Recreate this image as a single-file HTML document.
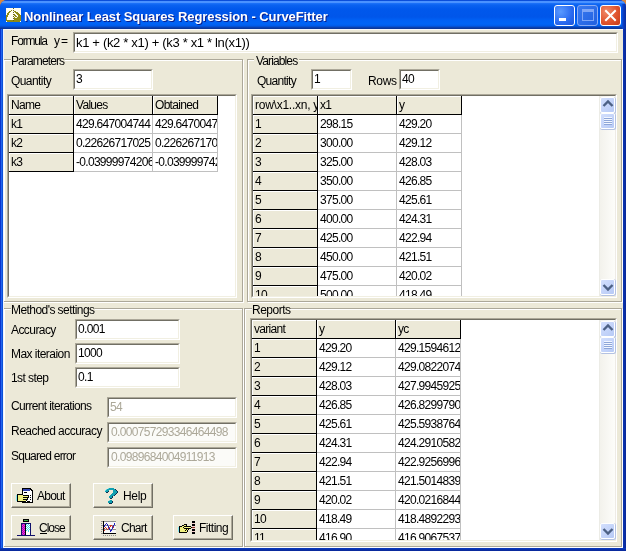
<!DOCTYPE html><html><head><meta charset="utf-8"><title>CurveFitter</title><style>
*{box-sizing:border-box}
body{margin:0;width:626px;height:551px;overflow:hidden;position:relative;background:#D9873E;font-family:"Liberation Sans",sans-serif;font-size:12px;color:#000}
.a{position:absolute}
.t{position:absolute;white-space:nowrap;line-height:13px}
.sk{border:1px solid;border-color:#ACA899 #FFFFFF #FFFFFF #ACA899}
.sk2{position:absolute;left:0;top:0;right:0;bottom:0;border:1px solid;border-color:#716F64 #F1EFE2 #F1EFE2 #716F64;overflow:hidden}
.fc{position:absolute;background:#ECE9D8;box-shadow:inset 1px 1px 0 #FFFFFF}
.c{position:absolute;white-space:nowrap;overflow:hidden;line-height:13px;font-size:12px;letter-spacing:-0.7px}
.btn{position:absolute;background:#ECE9D8;border:1px solid;border-color:#FFFFFF #716F64 #716F64 #FFFFFF;box-shadow:inset -1px -1px 0 #ACA899}
.sbt{position:absolute;background:linear-gradient(to right,#ECECE6 0px,#ECECE6 1px,#F3F2EC 1px,#FDFDFA 16px,#EEEBE6 16px)}
.sbb{position:absolute;border:1px solid #FFF;border-radius:2px;background:linear-gradient(135deg,#D3DFFD,#B7CAF6);box-shadow:0.5px 0.5px 0 0.5px #B4C2E2}
</style></head><body><div class="a" style="left:0;top:0;width:626px;height:551px;overflow:hidden;will-change:transform">
<div class="a" style="left:0;top:0;width:626px;height:551px;background:#0A4AE0;border-radius:7px 7px 0 0;overflow:hidden">
<div class="a" style="left:0;top:0;width:626px;height:29px;background:linear-gradient(to bottom,#0A4EDA 0px,#0A4EDA 1px,#4A92FF 1px,#4A92FF 3px,#1E74FA 3px,#0A62F0 5px,#0058EC 9px,#0056EA 17px,#0060F4 20px,#0064F6 24px,#005AE8 26px,#0A48C0 27px,#0A3AA0 28px,#0A3494 29px)"></div>
<div class="a" style="left:0;top:29px;width:3px;height:522px;background:linear-gradient(to right,#0A34CC 0px,#0A34CC 1px,#2266EE 1px,#2266EE 2px,#0A50D8 2px)"></div>
<div class="a" style="left:622px;top:4px;width:4px;height:25px;background:linear-gradient(to right,#0A50DC,#0A3CC0 40%,#0A2C9E)"></div>
<div class="a" style="left:623px;top:29px;width:3px;height:522px;background:linear-gradient(to right,#0A36B8,#0A2EA4,#0A2898)"></div>
<div class="a" style="left:0;top:548px;width:626px;height:3px;background:linear-gradient(to bottom,#0A3CC4,#0A30A8,#0A2898)"></div>
</div>
<svg class="a" style="left:6px;top:8px" width="15" height="14" shape-rendering="crispEdges"><rect x="0" y="0" width="7" height="1" fill="#FFFDF0"/><rect x="7" y="0" width="1" height="1" fill="#6A6410"/><rect x="8" y="0" width="7" height="1" fill="#FFFDF0"/><rect x="0" y="1" width="15" height="1" fill="#FFFDF0"/><rect x="0" y="2" width="5" height="1" fill="#FFFDF0"/><rect x="5" y="2" width="1" height="1" fill="#8E8A14"/><rect x="6" y="2" width="1" height="1" fill="#FFFDF0"/><rect x="7" y="2" width="1" height="1" fill="#6A6410"/><rect x="8" y="2" width="7" height="1" fill="#FFFDF0"/><rect x="0" y="3" width="3" height="1" fill="#FFFDF0"/><rect x="3" y="3" width="2" height="1" fill="#8E8A14"/><rect x="5" y="3" width="3" height="1" fill="#FFFDF0"/><rect x="8" y="3" width="2" height="1" fill="#8E8A14"/><rect x="10" y="3" width="5" height="1" fill="#FFFDF0"/><rect x="0" y="4" width="2" height="1" fill="#FFFDF0"/><rect x="2" y="4" width="2" height="1" fill="#8E8A14"/><rect x="4" y="4" width="3" height="1" fill="#FFFDF0"/><rect x="7" y="4" width="1" height="1" fill="#6A6410"/><rect x="8" y="4" width="1" height="1" fill="#FFFDF0"/><rect x="9" y="4" width="3" height="1" fill="#8E8A14"/><rect x="12" y="4" width="3" height="1" fill="#FFFDF0"/><rect x="0" y="5" width="1" height="1" fill="#FFFDF0"/><rect x="1" y="5" width="2" height="1" fill="#8E8A14"/><rect x="3" y="5" width="7" height="1" fill="#FFFDF0"/><rect x="10" y="5" width="3" height="1" fill="#8E8A14"/><rect x="13" y="5" width="2" height="1" fill="#FFFDF0"/><rect x="0" y="6" width="1" height="1" fill="#FFFDF0"/><rect x="1" y="6" width="2" height="1" fill="#8E8A14"/><rect x="3" y="6" width="4" height="1" fill="#FFFDF0"/><rect x="7" y="6" width="1" height="1" fill="#6A6410"/><rect x="8" y="6" width="1" height="1" fill="#8E8A14"/><rect x="9" y="6" width="2" height="1" fill="#FFFDF0"/><rect x="11" y="6" width="3" height="1" fill="#8E8A14"/><rect x="14" y="6" width="1" height="1" fill="#FFFDF0"/><rect x="0" y="7" width="2" height="1" fill="#8E8A14"/><rect x="2" y="7" width="6" height="1" fill="#FFFDF0"/><rect x="8" y="7" width="2" height="1" fill="#8E8A14"/><rect x="10" y="7" width="2" height="1" fill="#FFFDF0"/><rect x="12" y="7" width="3" height="1" fill="#8E8A14"/><rect x="0" y="8" width="2" height="1" fill="#8E8A14"/><rect x="2" y="8" width="5" height="1" fill="#FFFDF0"/><rect x="7" y="8" width="1" height="1" fill="#6A6410"/><rect x="8" y="8" width="1" height="1" fill="#FFFDF0"/><rect x="9" y="8" width="2" height="1" fill="#8E8A14"/><rect x="11" y="8" width="1" height="1" fill="#FFFDF0"/><rect x="12" y="8" width="3" height="1" fill="#8E8A14"/><rect x="0" y="9" width="1" height="1" fill="#8E8A14"/><rect x="1" y="9" width="7" height="1" fill="#FFFDF0"/><rect x="8" y="9" width="1" height="1" fill="#8E8A14"/><rect x="9" y="9" width="2" height="1" fill="#FFFDF0"/><rect x="11" y="9" width="4" height="1" fill="#8E8A14"/><rect x="0" y="10" width="1" height="1" fill="#8E8A14"/><rect x="1" y="10" width="6" height="1" fill="#FFFDF0"/><rect x="7" y="10" width="1" height="1" fill="#6A6410"/><rect x="8" y="10" width="7" height="1" fill="#8E8A14"/><rect x="0" y="11" width="1" height="1" fill="#8E8A14"/><rect x="1" y="11" width="7" height="1" fill="#FFFDF0"/><rect x="8" y="11" width="7" height="1" fill="#8E8A14"/><rect x="0" y="12" width="7" height="1" fill="#8E8A14"/><rect x="7" y="12" width="1" height="1" fill="#6A6410"/><rect x="8" y="12" width="7" height="1" fill="#8E8A14"/><rect x="0" y="13" width="1" height="1" fill="#FFFDF0"/><rect x="1" y="13" width="13" height="1" fill="#8E8A14"/><rect x="14" y="13" width="1" height="1" fill="#FFFDF0"/></svg>
<div class="t" style="left:24.00px;top:9px;font-size:13px;font-weight:bold;letter-spacing:-0.085px;color:#fff;text-shadow:1px 1px 0 #0A1E8A;line-height:16px">Nonlinear Least Squares Regression - CurveFitter</div>
<div class="a" style="left:554px;top:5px;width:21px;height:21px;border:1px solid #fff;border-radius:3px;background:radial-gradient(circle at 30% 30%,#5A9AFF,#2A6AF0 60%,#1A55DA);overflow:hidden"><div class="a" style="left:4px;top:12px;width:7px;height:3px;background:#fff"></div></div>
<div class="a" style="left:577px;top:5px;width:21px;height:21px;border:1px solid #8AACF4;border-radius:3px;background:linear-gradient(135deg,#3A7AF0,#2060E0);overflow:hidden"><div class="a" style="left:4px;top:3px;width:12px;height:12px;border:1px solid #7FA6F6;border-top-width:3px"></div></div>
<div class="a" style="left:600px;top:5px;width:21px;height:21px;border:1px solid #fff;border-radius:3px;background:radial-gradient(circle at 30% 30%,#F08A6A,#E0542E 55%,#C63A18);overflow:hidden"><svg class="a" style="left:0;top:0" width="19" height="19"><path d="M5,5 L14,14 M14,5 L5,14" stroke="#fff" stroke-width="2" stroke-linecap="square"/></svg></div>
<div class="a" style="left:3px;top:29px;width:620px;height:519px;background:#ECE9D8;border-top:1px solid #F8F8FC;border-left:1px solid #F0F4FC"></div>
<div class="t" style="left:11.00px;top:35px;font-size:12px;letter-spacing:-1.167px">Formula</div>
<div class="t" style="left:54.00px;top:35px;font-size:12px">y</div>
<div class="t" style="left:61.00px;top:35px;font-size:12px">=</div>
<div class="a sk" style="left:73px;top:32px;width:545px;height:21px"><div class="sk2" style="background:#fff"></div></div>
<div class="t" style="left:76.00px;top:36px;font-size:13px;letter-spacing:-0.324px">k1 + (k2 * x1) + (k3 * x1 * ln(x1))</div>
<div class="a" style="left:3px;top:59px;width:240px;height:243px;border:1px solid #ACA899;box-shadow:1px 1px 0 #FFFFFF,inset 1px 1px 0 #FFFFFF"></div>
<div class="a" style="left:247px;top:59px;width:375px;height:243px;border:1px solid #ACA899;box-shadow:1px 1px 0 #FFFFFF,inset 1px 1px 0 #FFFFFF"></div>
<div class="a" style="left:3px;top:308px;width:240px;height:239px;border:1px solid #ACA899;box-shadow:1px 1px 0 #FFFFFF,inset 1px 1px 0 #FFFFFF"></div>
<div class="a" style="left:244px;top:308px;width:378px;height:239px;border:1px solid #ACA899;box-shadow:1px 1px 0 #FFFFFF,inset 1px 1px 0 #FFFFFF"></div>
<div class="a" style="left:11px;top:57px;width:54px;height:4px;background:#ECE9D8"></div>
<div class="t" style="left:11.00px;top:55px;font-size:12px;letter-spacing:-0.889px">Parameters</div>
<div class="a" style="left:254px;top:57px;width:45px;height:4px;background:#ECE9D8"></div>
<div class="t" style="left:256.00px;top:55px;font-size:12px;letter-spacing:-0.875px">Variables</div>
<div class="a" style="left:11px;top:306px;width:84px;height:4px;background:#ECE9D8"></div>
<div class="t" style="left:11.00px;top:304px;font-size:12px;letter-spacing:-0.562px">Method's settings</div>
<div class="a" style="left:252px;top:306px;width:38px;height:4px;background:#ECE9D8"></div>
<div class="t" style="left:252.00px;top:304px;font-size:12px;letter-spacing:-0.500px">Reports</div>
<div class="t" style="left:11.00px;top:75px;font-size:12px;letter-spacing:-0.571px">Quantity</div>
<div class="a sk" style="left:73px;top:69px;width:80px;height:21px"><div class="sk2" style="background:#fff"></div></div>
<div class="t" style="left:76.00px;top:73px;font-size:12px;letter-spacing:-0.670px">3</div>
<div class="a sk" style="left:7px;top:94px;width:230px;height:204px"><div class="sk2" style="background:#fff"><div class="fc" style="left:0px;top:0px;width:64px;height:18px"></div><div class="fc" style="left:65px;top:0px;width:78px;height:18px"></div><div class="fc" style="left:144px;top:0px;width:64px;height:18px"></div><div class="fc" style="left:0px;top:19px;width:64px;height:18px"></div><div class="fc" style="left:0px;top:38px;width:64px;height:18px"></div><div class="fc" style="left:0px;top:57px;width:64px;height:18px"></div><div class="a" style="left:64px;top:0;width:1px;height:76px;background:#000"></div><div class="a" style="left:64px;top:0;width:1px;height:19px;background:#000"></div><div class="a" style="left:143px;top:0;width:1px;height:76px;background:#C0C0C0"></div><div class="a" style="left:143px;top:0;width:1px;height:19px;background:#000"></div><div class="a" style="left:208px;top:0;width:1px;height:76px;background:#C0C0C0"></div><div class="a" style="left:208px;top:0;width:1px;height:19px;background:#000"></div><div class="a" style="left:0;top:18px;width:209px;height:1px;background:#000"></div><div class="a" style="left:0;top:37px;width:209px;height:1px;background:#C0C0C0"></div><div class="a" style="left:0;top:37px;width:65px;height:1px;background:#000"></div><div class="a" style="left:0;top:56px;width:209px;height:1px;background:#C0C0C0"></div><div class="a" style="left:0;top:56px;width:65px;height:1px;background:#000"></div><div class="a" style="left:0;top:75px;width:209px;height:1px;background:#C0C0C0"></div><div class="a" style="left:0;top:75px;width:65px;height:1px;background:#000"></div><div class="c" style="left:2px;top:3px;width:62px">Name</div><div class="c" style="left:67px;top:3px;width:76px">Values</div><div class="c" style="left:146px;top:3px;width:62px">Obtained</div><div class="c" style="left:2px;top:22px;width:62px">k1</div><div class="c" style="left:67px;top:22px;width:76px">429.647004744</div><div class="c" style="left:146px;top:22px;width:62px">429.647004744</div><div class="c" style="left:2px;top:41px;width:62px">k2</div><div class="c" style="left:67px;top:41px;width:76px">0.22626717025</div><div class="c" style="left:146px;top:41px;width:62px">0.22626717025</div><div class="c" style="left:2px;top:60px;width:62px">k3</div><div class="c" style="left:67px;top:60px;width:76px">-0.03999974206</div><div class="c" style="left:146px;top:60px;width:62px">-0.03999974206</div></div></div>
<div class="t" style="left:257.00px;top:75px;font-size:12px;letter-spacing:-0.714px">Quantity</div>
<div class="a sk" style="left:311px;top:69px;width:41px;height:21px"><div class="sk2" style="background:#fff"></div></div>
<div class="t" style="left:314.00px;top:73px;font-size:12px;letter-spacing:-0.670px">1</div>
<div class="t" style="left:368.00px;top:75px;font-size:12px;letter-spacing:-0.333px">Rows</div>
<div class="a sk" style="left:399px;top:69px;width:41px;height:21px"><div class="sk2" style="background:#fff"></div></div>
<div class="t" style="left:402.00px;top:73px;font-size:12px;letter-spacing:-0.670px">40</div>
<div class="a sk" style="left:251px;top:94px;width:366px;height:204px"><div class="sk2" style="background:#fff"><div class="fc" style="left:0px;top:0px;width:64px;height:18px"></div><div class="fc" style="left:65px;top:0px;width:78px;height:18px"></div><div class="fc" style="left:144px;top:0px;width:64px;height:18px"></div><div class="fc" style="left:0px;top:19px;width:64px;height:18px"></div><div class="fc" style="left:0px;top:38px;width:64px;height:18px"></div><div class="fc" style="left:0px;top:57px;width:64px;height:18px"></div><div class="fc" style="left:0px;top:76px;width:64px;height:18px"></div><div class="fc" style="left:0px;top:95px;width:64px;height:18px"></div><div class="fc" style="left:0px;top:114px;width:64px;height:18px"></div><div class="fc" style="left:0px;top:133px;width:64px;height:18px"></div><div class="fc" style="left:0px;top:152px;width:64px;height:18px"></div><div class="fc" style="left:0px;top:171px;width:64px;height:18px"></div><div class="fc" style="left:0px;top:190px;width:64px;height:18px"></div><div class="fc" style="left:0px;top:209px;width:64px;height:18px"></div><div class="a" style="left:64px;top:0;width:1px;height:228px;background:#000"></div><div class="a" style="left:64px;top:0;width:1px;height:19px;background:#000"></div><div class="a" style="left:143px;top:0;width:1px;height:228px;background:#C0C0C0"></div><div class="a" style="left:143px;top:0;width:1px;height:19px;background:#000"></div><div class="a" style="left:208px;top:0;width:1px;height:228px;background:#C0C0C0"></div><div class="a" style="left:208px;top:0;width:1px;height:19px;background:#000"></div><div class="a" style="left:0;top:18px;width:209px;height:1px;background:#000"></div><div class="a" style="left:0;top:37px;width:209px;height:1px;background:#C0C0C0"></div><div class="a" style="left:0;top:37px;width:65px;height:1px;background:#000"></div><div class="a" style="left:0;top:56px;width:209px;height:1px;background:#C0C0C0"></div><div class="a" style="left:0;top:56px;width:65px;height:1px;background:#000"></div><div class="a" style="left:0;top:75px;width:209px;height:1px;background:#C0C0C0"></div><div class="a" style="left:0;top:75px;width:65px;height:1px;background:#000"></div><div class="a" style="left:0;top:94px;width:209px;height:1px;background:#C0C0C0"></div><div class="a" style="left:0;top:94px;width:65px;height:1px;background:#000"></div><div class="a" style="left:0;top:113px;width:209px;height:1px;background:#C0C0C0"></div><div class="a" style="left:0;top:113px;width:65px;height:1px;background:#000"></div><div class="a" style="left:0;top:132px;width:209px;height:1px;background:#C0C0C0"></div><div class="a" style="left:0;top:132px;width:65px;height:1px;background:#000"></div><div class="a" style="left:0;top:151px;width:209px;height:1px;background:#C0C0C0"></div><div class="a" style="left:0;top:151px;width:65px;height:1px;background:#000"></div><div class="a" style="left:0;top:170px;width:209px;height:1px;background:#C0C0C0"></div><div class="a" style="left:0;top:170px;width:65px;height:1px;background:#000"></div><div class="a" style="left:0;top:189px;width:209px;height:1px;background:#C0C0C0"></div><div class="a" style="left:0;top:189px;width:65px;height:1px;background:#000"></div><div class="a" style="left:0;top:208px;width:209px;height:1px;background:#C0C0C0"></div><div class="a" style="left:0;top:208px;width:65px;height:1px;background:#000"></div><div class="a" style="left:0;top:227px;width:209px;height:1px;background:#C0C0C0"></div><div class="a" style="left:0;top:227px;width:65px;height:1px;background:#000"></div><div class="c" style="left:2px;top:3px;width:62px;letter-spacing:-0.25px">row\x1..xn, y</div><div class="c" style="left:67px;top:3px;width:76px">x1</div><div class="c" style="left:146px;top:3px;width:62px">y</div><div class="c" style="left:2px;top:22px;width:62px">1</div><div class="c" style="left:67px;top:22px;width:76px">298.15</div><div class="c" style="left:146px;top:22px;width:62px">429.20</div><div class="c" style="left:2px;top:41px;width:62px">2</div><div class="c" style="left:67px;top:41px;width:76px">300.00</div><div class="c" style="left:146px;top:41px;width:62px">429.12</div><div class="c" style="left:2px;top:60px;width:62px">3</div><div class="c" style="left:67px;top:60px;width:76px">325.00</div><div class="c" style="left:146px;top:60px;width:62px">428.03</div><div class="c" style="left:2px;top:79px;width:62px">4</div><div class="c" style="left:67px;top:79px;width:76px">350.00</div><div class="c" style="left:146px;top:79px;width:62px">426.85</div><div class="c" style="left:2px;top:98px;width:62px">5</div><div class="c" style="left:67px;top:98px;width:76px">375.00</div><div class="c" style="left:146px;top:98px;width:62px">425.61</div><div class="c" style="left:2px;top:117px;width:62px">6</div><div class="c" style="left:67px;top:117px;width:76px">400.00</div><div class="c" style="left:146px;top:117px;width:62px">424.31</div><div class="c" style="left:2px;top:136px;width:62px">7</div><div class="c" style="left:67px;top:136px;width:76px">425.00</div><div class="c" style="left:146px;top:136px;width:62px">422.94</div><div class="c" style="left:2px;top:155px;width:62px">8</div><div class="c" style="left:67px;top:155px;width:76px">450.00</div><div class="c" style="left:146px;top:155px;width:62px">421.51</div><div class="c" style="left:2px;top:174px;width:62px">9</div><div class="c" style="left:67px;top:174px;width:76px">475.00</div><div class="c" style="left:146px;top:174px;width:62px">420.02</div><div class="c" style="left:2px;top:193px;width:62px">10</div><div class="c" style="left:67px;top:193px;width:76px">500.00</div><div class="c" style="left:146px;top:193px;width:62px">418.49</div><div class="c" style="left:2px;top:212px;width:62px">11</div><div class="c" style="left:67px;top:212px;width:76px">525.00</div><div class="c" style="left:146px;top:212px;width:62px">416.90</div></div></div>
<div class="sbt" style="left:599px;top:96px;width:17px;height:200px"></div>
<div class="sbb" style="left:600px;top:97px;width:15px;height:16px"><svg class="a" style="left:0;top:0" width="14" height="14"><path d="M2.5,8 L7,3.5 L11.5,8" fill="none" stroke="#4D6185" stroke-width="2.4"/></svg></div>
<div class="sbb" style="left:600px;top:113px;width:15px;height:16px"><svg class="a" style="left:0;top:0" width="14" height="14"><path d="M3,3.5 H11 M3,5.5 H11 M3,7.5 H11 M3,9.5 H11" stroke="#F2F6FF" stroke-width="1"/><path d="M3,4.5 H11 M3,6.5 H11 M3,8.5 H11 M3,10.5 H11" stroke="#8EA6D8" stroke-width="1"/></svg></div>
<div class="sbb" style="left:600px;top:279px;width:15px;height:16px"><svg class="a" style="left:0;top:0" width="14" height="14"><path d="M2.5,5 L7,9.5 L11.5,5" fill="none" stroke="#4D6185" stroke-width="2.4"/></svg></div>
<div class="t" style="left:11.00px;top:324px;font-size:12px;letter-spacing:-0.571px">Accuracy</div>
<div class="a sk" style="left:75px;top:319px;width:105px;height:21px"><div class="sk2" style="background:#fff"></div></div>
<div class="t" style="left:78.00px;top:323px;font-size:12px;letter-spacing:-0.670px">0.001</div>
<div class="t" style="left:11.00px;top:348px;font-size:12px;letter-spacing:-0.545px">Max iteraion</div>
<div class="a sk" style="left:75px;top:343px;width:105px;height:21px"><div class="sk2" style="background:#fff"></div></div>
<div class="t" style="left:78.00px;top:347px;font-size:12px;letter-spacing:-0.670px">1000</div>
<div class="t" style="left:11.00px;top:372px;font-size:12px;letter-spacing:-0.571px">1st step</div>
<div class="a sk" style="left:75px;top:367px;width:105px;height:21px"><div class="sk2" style="background:#fff"></div></div>
<div class="t" style="left:78.00px;top:371px;font-size:12px;letter-spacing:-0.670px">0.1</div>
<div class="t" style="left:11.00px;top:400px;font-size:12px;letter-spacing:-0.647px">Current iterations</div>
<div class="a sk" style="left:107px;top:397px;width:130px;height:21px"><div class="sk2" style="background:#fff"></div></div>
<div class="t" style="left:110.00px;top:401px;font-size:12px;letter-spacing:-0.670px;color:#ACA899">54</div>
<div class="t" style="left:11.00px;top:425px;font-size:12px;letter-spacing:-0.533px">Reached accuracy</div>
<div class="a sk" style="left:107px;top:422px;width:130px;height:21px"><div class="sk2" style="background:#FBFBF8"></div></div>
<div class="t" style="left:111.00px;top:426px;font-size:12px;letter-spacing:-0.670px;color:#ACA899">0.000757293346464498</div>
<div class="t" style="left:11.00px;top:450px;font-size:12px;letter-spacing:-0.750px">Squared error</div>
<div class="a sk" style="left:107px;top:447px;width:130px;height:21px"><div class="sk2" style="background:#FBFBF8"></div></div>
<div class="t" style="left:111.00px;top:451px;font-size:12px;letter-spacing:-0.670px;color:#ACA899">0.0989684004911913</div>
<div class="btn" style="left:11px;top:483px;width:60px;height:25px"></div>
<div class="btn" style="left:93px;top:483px;width:60px;height:25px"></div>
<div class="btn" style="left:11px;top:515px;width:60px;height:25px"></div>
<div class="btn" style="left:93px;top:515px;width:60px;height:25px"></div>
<div class="btn" style="left:173px;top:515px;width:60px;height:25px"></div>
<svg class="a" style="left:14px;top:486px" width="22" height="17" shape-rendering="crispEdges"><rect x="8" y="2" width="9" height="1" fill="#000"/><rect x="8" y="3" width="1" height="1" fill="#000"/><rect x="9" y="3" width="7" height="1" fill="#3040B0"/><rect x="16" y="3" width="2" height="1" fill="#000"/><rect x="8" y="4" width="1" height="1" fill="#000"/><rect x="9" y="4" width="7" height="1" fill="#3040B0"/><rect x="16" y="4" width="1" height="1" fill="#FFF"/><rect x="17" y="4" width="2" height="1" fill="#000"/><rect x="8" y="5" width="1" height="1" fill="#000"/><rect x="9" y="5" width="9" height="1" fill="#FFF"/><rect x="18" y="5" width="1" height="1" fill="#000"/><rect x="8" y="6" width="1" height="1" fill="#000"/><rect x="9" y="6" width="1" height="1" fill="#FFF"/><rect x="10" y="6" width="3" height="1" fill="#000"/><rect x="13" y="6" width="5" height="1" fill="#FFF"/><rect x="18" y="6" width="1" height="1" fill="#000"/><rect x="8" y="7" width="1" height="1" fill="#000"/><rect x="9" y="7" width="9" height="1" fill="#FFF"/><rect x="18" y="7" width="1" height="1" fill="#000"/><rect x="3" y="8" width="6" height="1" fill="#000"/><rect x="9" y="8" width="9" height="1" fill="#FFF"/><rect x="18" y="8" width="1" height="1" fill="#000"/><rect x="2" y="9" width="1" height="1" fill="#80E8F0"/><rect x="3" y="9" width="1" height="1" fill="#000"/><rect x="4" y="9" width="5" height="1" fill="#F0F080"/><rect x="9" y="9" width="6" height="1" fill="#000"/><rect x="15" y="9" width="1" height="1" fill="#FFF"/><rect x="16" y="9" width="1" height="1" fill="#000"/><rect x="17" y="9" width="1" height="1" fill="#FFF"/><rect x="18" y="9" width="1" height="1" fill="#000"/><rect x="2" y="10" width="1" height="1" fill="#80E8F0"/><rect x="3" y="10" width="1" height="1" fill="#000"/><rect x="4" y="10" width="10" height="1" fill="#F0F080"/><rect x="14" y="10" width="1" height="1" fill="#000"/><rect x="15" y="10" width="3" height="1" fill="#FFF"/><rect x="18" y="10" width="1" height="1" fill="#000"/><rect x="2" y="11" width="1" height="1" fill="#80E8F0"/><rect x="3" y="11" width="1" height="1" fill="#000"/><rect x="4" y="11" width="5" height="1" fill="#F0F080"/><rect x="9" y="11" width="6" height="1" fill="#000"/><rect x="15" y="11" width="1" height="1" fill="#FFF"/><rect x="16" y="11" width="1" height="1" fill="#000"/><rect x="17" y="11" width="1" height="1" fill="#FFF"/><rect x="18" y="11" width="1" height="1" fill="#000"/><rect x="2" y="12" width="1" height="1" fill="#80E8F0"/><rect x="3" y="12" width="1" height="1" fill="#000"/><rect x="4" y="12" width="9" height="1" fill="#F0F080"/><rect x="13" y="12" width="1" height="1" fill="#000"/><rect x="14" y="12" width="4" height="1" fill="#FFF"/><rect x="18" y="12" width="1" height="1" fill="#000"/><rect x="2" y="13" width="1" height="1" fill="#80E8F0"/><rect x="3" y="13" width="1" height="1" fill="#000"/><rect x="4" y="13" width="5" height="1" fill="#F0F080"/><rect x="9" y="13" width="5" height="1" fill="#000"/><rect x="14" y="13" width="2" height="1" fill="#FFF"/><rect x="16" y="13" width="1" height="1" fill="#000"/><rect x="17" y="13" width="1" height="1" fill="#FFF"/><rect x="18" y="13" width="1" height="1" fill="#000"/><rect x="2" y="14" width="1" height="1" fill="#80E8F0"/><rect x="3" y="14" width="1" height="1" fill="#000"/><rect x="4" y="14" width="8" height="1" fill="#F0F080"/><rect x="12" y="14" width="1" height="1" fill="#000"/><rect x="13" y="14" width="5" height="1" fill="#FFF"/><rect x="18" y="14" width="1" height="1" fill="#000"/><rect x="3" y="15" width="9" height="1" fill="#000"/><rect x="12" y="15" width="1" height="1" fill="#FFF"/><rect x="13" y="15" width="3" height="1" fill="#000"/><rect x="16" y="15" width="2" height="1" fill="#FFF"/><rect x="18" y="15" width="1" height="1" fill="#000"/><rect x="8" y="16" width="11" height="1" fill="#000"/></svg>
<div class="t" style="left:37.00px;top:490px;font-size:12px;letter-spacing:-0.750px">About</div>
<svg class="a" style="left:100px;top:486px" width="22" height="18" shape-rendering="crispEdges"><rect x="8" y="2" width="1" height="1" fill="#70E0E8"/><rect x="9" y="2" width="5" height="1" fill="#10A0B0"/><rect x="6" y="3" width="1" height="1" fill="#70E0E8"/><rect x="7" y="3" width="8" height="1" fill="#10A0B0"/><rect x="15" y="3" width="1" height="1" fill="#083050"/><rect x="5" y="4" width="1" height="1" fill="#70E0E8"/><rect x="6" y="4" width="3" height="1" fill="#10A0B0"/><rect x="13" y="4" width="3" height="1" fill="#10A0B0"/><rect x="16" y="4" width="1" height="1" fill="#083050"/><rect x="5" y="5" width="3" height="1" fill="#10A0B0"/><rect x="8" y="5" width="1" height="1" fill="#083050"/><rect x="13" y="5" width="4" height="1" fill="#10A0B0"/><rect x="17" y="5" width="1" height="1" fill="#083050"/><rect x="6" y="6" width="2" height="1" fill="#083050"/><rect x="13" y="6" width="4" height="1" fill="#10A0B0"/><rect x="17" y="6" width="1" height="1" fill="#083050"/><rect x="12" y="7" width="4" height="1" fill="#10A0B0"/><rect x="16" y="7" width="1" height="1" fill="#083050"/><rect x="11" y="8" width="4" height="1" fill="#10A0B0"/><rect x="15" y="8" width="1" height="1" fill="#083050"/><rect x="10" y="9" width="4" height="1" fill="#10A0B0"/><rect x="14" y="9" width="1" height="1" fill="#083050"/><rect x="9" y="10" width="3" height="1" fill="#10A0B0"/><rect x="12" y="10" width="1" height="1" fill="#083050"/><rect x="9" y="11" width="3" height="1" fill="#10A0B0"/><rect x="12" y="11" width="1" height="1" fill="#083050"/><rect x="10" y="12" width="2" height="1" fill="#083050"/><rect x="9" y="14" width="1" height="1" fill="#70E0E8"/><rect x="10" y="14" width="2" height="1" fill="#10A0B0"/><rect x="8" y="15" width="4" height="1" fill="#10A0B0"/><rect x="12" y="15" width="1" height="1" fill="#083050"/><rect x="8" y="16" width="4" height="1" fill="#10A0B0"/><rect x="12" y="16" width="1" height="1" fill="#083050"/><rect x="9" y="17" width="3" height="1" fill="#083050"/></svg>
<div class="t" style="left:123.00px;top:490px;font-size:12px;letter-spacing:-0.333px">Help</div>
<svg class="a" style="left:14px;top:516px" width="22" height="20" shape-rendering="crispEdges"><rect x="9" y="3" width="6" height="1" fill="#000"/><rect x="9" y="4" width="1" height="1" fill="#000"/><rect x="10" y="4" width="4" height="1" fill="#30B040"/><rect x="14" y="4" width="1" height="1" fill="#000"/><rect x="9" y="5" width="6" height="1" fill="#000"/><rect x="7" y="7" width="10" height="1" fill="#10106A"/><rect x="7" y="8" width="1" height="1" fill="#10106A"/><rect x="8" y="8" width="1" height="1" fill="#A010B0"/><rect x="9" y="8" width="1" height="1" fill="#F030E0"/><rect x="10" y="8" width="1" height="1" fill="#A010B0"/><rect x="11" y="8" width="1" height="1" fill="#000"/><rect x="12" y="8" width="1" height="1" fill="#40E0E8"/><rect x="13" y="8" width="1" height="1" fill="#FFFFFF"/><rect x="14" y="8" width="1" height="1" fill="#40E0E8"/><rect x="15" y="8" width="1" height="1" fill="#FFFFFF"/><rect x="16" y="8" width="1" height="1" fill="#10106A"/><rect x="7" y="9" width="1" height="1" fill="#10106A"/><rect x="8" y="9" width="1" height="1" fill="#F030E0"/><rect x="9" y="9" width="1" height="1" fill="#A010B0"/><rect x="10" y="9" width="1" height="1" fill="#F030E0"/><rect x="11" y="9" width="1" height="1" fill="#000"/><rect x="12" y="9" width="1" height="1" fill="#FFFFFF"/><rect x="13" y="9" width="1" height="1" fill="#40E0E8"/><rect x="14" y="9" width="1" height="1" fill="#FFFFFF"/><rect x="15" y="9" width="1" height="1" fill="#40E0E8"/><rect x="16" y="9" width="1" height="1" fill="#10106A"/><rect x="7" y="10" width="1" height="1" fill="#10106A"/><rect x="8" y="10" width="1" height="1" fill="#A010B0"/><rect x="9" y="10" width="1" height="1" fill="#F030E0"/><rect x="10" y="10" width="1" height="1" fill="#A010B0"/><rect x="11" y="10" width="1" height="1" fill="#000"/><rect x="12" y="10" width="1" height="1" fill="#40E0E8"/><rect x="13" y="10" width="1" height="1" fill="#FFFFFF"/><rect x="14" y="10" width="1" height="1" fill="#40E0E8"/><rect x="15" y="10" width="1" height="1" fill="#FFFFFF"/><rect x="16" y="10" width="1" height="1" fill="#10106A"/><rect x="7" y="11" width="1" height="1" fill="#10106A"/><rect x="8" y="11" width="1" height="1" fill="#F030E0"/><rect x="9" y="11" width="1" height="1" fill="#A010B0"/><rect x="10" y="11" width="1" height="1" fill="#F030E0"/><rect x="11" y="11" width="1" height="1" fill="#000"/><rect x="12" y="11" width="1" height="1" fill="#FFFFFF"/><rect x="13" y="11" width="1" height="1" fill="#40E0E8"/><rect x="14" y="11" width="1" height="1" fill="#FFFFFF"/><rect x="15" y="11" width="1" height="1" fill="#40E0E8"/><rect x="16" y="11" width="1" height="1" fill="#10106A"/><rect x="7" y="12" width="1" height="1" fill="#10106A"/><rect x="8" y="12" width="1" height="1" fill="#A010B0"/><rect x="9" y="12" width="1" height="1" fill="#F030E0"/><rect x="10" y="12" width="1" height="1" fill="#A010B0"/><rect x="11" y="12" width="1" height="1" fill="#000"/><rect x="12" y="12" width="1" height="1" fill="#40E0E8"/><rect x="13" y="12" width="1" height="1" fill="#FFFFFF"/><rect x="14" y="12" width="1" height="1" fill="#40E0E8"/><rect x="15" y="12" width="1" height="1" fill="#FFFFFF"/><rect x="16" y="12" width="1" height="1" fill="#10106A"/><rect x="7" y="13" width="1" height="1" fill="#10106A"/><rect x="8" y="13" width="1" height="1" fill="#F030E0"/><rect x="9" y="13" width="1" height="1" fill="#A010B0"/><rect x="10" y="13" width="1" height="1" fill="#F030E0"/><rect x="11" y="13" width="1" height="1" fill="#000"/><rect x="12" y="13" width="1" height="1" fill="#FFFFFF"/><rect x="13" y="13" width="1" height="1" fill="#40E0E8"/><rect x="14" y="13" width="1" height="1" fill="#FFFFFF"/><rect x="15" y="13" width="1" height="1" fill="#40E0E8"/><rect x="16" y="13" width="1" height="1" fill="#10106A"/><rect x="7" y="14" width="1" height="1" fill="#10106A"/><rect x="8" y="14" width="1" height="1" fill="#A010B0"/><rect x="9" y="14" width="1" height="1" fill="#F030E0"/><rect x="10" y="14" width="1" height="1" fill="#A010B0"/><rect x="11" y="14" width="1" height="1" fill="#000"/><rect x="12" y="14" width="1" height="1" fill="#40E0E8"/><rect x="13" y="14" width="1" height="1" fill="#FFFFFF"/><rect x="14" y="14" width="1" height="1" fill="#40E0E8"/><rect x="15" y="14" width="1" height="1" fill="#FFFFFF"/><rect x="16" y="14" width="1" height="1" fill="#10106A"/><rect x="7" y="15" width="1" height="1" fill="#10106A"/><rect x="8" y="15" width="1" height="1" fill="#F030E0"/><rect x="9" y="15" width="1" height="1" fill="#A010B0"/><rect x="10" y="15" width="1" height="1" fill="#F030E0"/><rect x="11" y="15" width="1" height="1" fill="#000"/><rect x="12" y="15" width="2" height="1" fill="#FFFFFF"/><rect x="14" y="15" width="1" height="1" fill="#40E0E8"/><rect x="15" y="15" width="1" height="1" fill="#FFFFFF"/><rect x="16" y="15" width="1" height="1" fill="#10106A"/><rect x="7" y="16" width="1" height="1" fill="#10106A"/><rect x="8" y="16" width="1" height="1" fill="#A010B0"/><rect x="9" y="16" width="1" height="1" fill="#F030E0"/><rect x="10" y="16" width="1" height="1" fill="#A010B0"/><rect x="11" y="16" width="1" height="1" fill="#000"/><rect x="12" y="16" width="4" height="1" fill="#FFFFFF"/><rect x="16" y="16" width="1" height="1" fill="#10106A"/><rect x="7" y="17" width="1" height="1" fill="#10106A"/><rect x="8" y="17" width="1" height="1" fill="#F030E0"/><rect x="9" y="17" width="1" height="1" fill="#A010B0"/><rect x="10" y="17" width="1" height="1" fill="#F030E0"/><rect x="11" y="17" width="1" height="1" fill="#000"/><rect x="12" y="17" width="4" height="1" fill="#FFFFFF"/><rect x="16" y="17" width="1" height="1" fill="#10106A"/><rect x="7" y="18" width="1" height="1" fill="#10106A"/><rect x="8" y="18" width="1" height="1" fill="#A010B0"/><rect x="9" y="18" width="1" height="1" fill="#F030E0"/><rect x="10" y="18" width="1" height="1" fill="#A010B0"/><rect x="11" y="18" width="1" height="1" fill="#000"/><rect x="12" y="18" width="4" height="1" fill="#FFFFFF"/><rect x="16" y="18" width="1" height="1" fill="#10106A"/><rect x="3" y="19" width="18" height="1" fill="#10106A"/></svg>
<div class="t" style="left:39.00px;top:522px;font-size:12px;letter-spacing:-1.000px">Close</div>
<div class="a" style="left:40px;top:533px;width:7px;height:1px;background:#000"></div>
<svg class="a" style="left:98px;top:518px" width="22" height="18" shape-rendering="crispEdges"><rect x="3" y="3" width="2" height="1" fill="#909090"/><rect x="5" y="3" width="1" height="1" fill="#000"/><rect x="6" y="3" width="12" height="1" fill="#909090"/><rect x="5" y="4" width="1" height="1" fill="#000"/><rect x="6" y="4" width="12" height="1" fill="#F8F8F8"/><rect x="3" y="5" width="1" height="1" fill="#909090"/><rect x="5" y="5" width="1" height="1" fill="#000"/><rect x="6" y="5" width="2" height="1" fill="#F8F8F8"/><rect x="8" y="5" width="1" height="1" fill="#2020C0"/><rect x="9" y="5" width="7" height="1" fill="#F8F8F8"/><rect x="16" y="5" width="1" height="1" fill="#2020C0"/><rect x="17" y="5" width="1" height="1" fill="#F8F8F8"/><rect x="5" y="6" width="1" height="1" fill="#000"/><rect x="6" y="6" width="1" height="1" fill="#F8F8F8"/><rect x="7" y="6" width="1" height="1" fill="#2020C0"/><rect x="8" y="6" width="1" height="1" fill="#F8F8F8"/><rect x="9" y="6" width="1" height="1" fill="#2020C0"/><rect x="10" y="6" width="6" height="1" fill="#F8F8F8"/><rect x="16" y="6" width="1" height="1" fill="#2020C0"/><rect x="17" y="6" width="1" height="1" fill="#F8F8F8"/><rect x="3" y="7" width="2" height="1" fill="#909090"/><rect x="5" y="7" width="1" height="1" fill="#000"/><rect x="6" y="7" width="1" height="1" fill="#2020C0"/><rect x="7" y="7" width="2" height="1" fill="#909090"/><rect x="9" y="7" width="1" height="1" fill="#2020C0"/><rect x="10" y="7" width="2" height="1" fill="#909090"/><rect x="12" y="7" width="2" height="1" fill="#D03020"/><rect x="14" y="7" width="1" height="1" fill="#909090"/><rect x="15" y="7" width="1" height="1" fill="#2020C0"/><rect x="16" y="7" width="2" height="1" fill="#909090"/><rect x="5" y="8" width="1" height="1" fill="#000"/><rect x="6" y="8" width="1" height="1" fill="#2020C0"/><rect x="7" y="8" width="3" height="1" fill="#F8F8F8"/><rect x="10" y="8" width="1" height="1" fill="#2020C0"/><rect x="11" y="8" width="1" height="1" fill="#F8F8F8"/><rect x="12" y="8" width="1" height="1" fill="#D03020"/><rect x="13" y="8" width="1" height="1" fill="#F8F8F8"/><rect x="14" y="8" width="1" height="1" fill="#D03020"/><rect x="15" y="8" width="1" height="1" fill="#2020C0"/><rect x="16" y="8" width="2" height="1" fill="#F8F8F8"/><rect x="3" y="9" width="1" height="1" fill="#909090"/><rect x="5" y="9" width="1" height="1" fill="#000"/><rect x="6" y="9" width="1" height="1" fill="#F8F8F8"/><rect x="7" y="9" width="1" height="1" fill="#D03020"/><rect x="8" y="9" width="2" height="1" fill="#F8F8F8"/><rect x="10" y="9" width="1" height="1" fill="#2020C0"/><rect x="11" y="9" width="1" height="1" fill="#D03020"/><rect x="12" y="9" width="2" height="1" fill="#F8F8F8"/><rect x="14" y="9" width="1" height="1" fill="#2020C0"/><rect x="15" y="9" width="1" height="1" fill="#D03020"/><rect x="16" y="9" width="2" height="1" fill="#F8F8F8"/><rect x="5" y="10" width="1" height="1" fill="#000"/><rect x="6" y="10" width="1" height="1" fill="#D03020"/><rect x="7" y="10" width="1" height="1" fill="#F8F8F8"/><rect x="8" y="10" width="1" height="1" fill="#D03020"/><rect x="9" y="10" width="1" height="1" fill="#F8F8F8"/><rect x="10" y="10" width="1" height="1" fill="#D03020"/><rect x="11" y="10" width="1" height="1" fill="#2020C0"/><rect x="12" y="10" width="2" height="1" fill="#F8F8F8"/><rect x="14" y="10" width="1" height="1" fill="#2020C0"/><rect x="15" y="10" width="3" height="1" fill="#F8F8F8"/><rect x="3" y="11" width="2" height="1" fill="#909090"/><rect x="5" y="11" width="1" height="1" fill="#000"/><rect x="6" y="11" width="3" height="1" fill="#909090"/><rect x="9" y="11" width="1" height="1" fill="#D03020"/><rect x="10" y="11" width="1" height="1" fill="#909090"/><rect x="11" y="11" width="1" height="1" fill="#2020C0"/><rect x="12" y="11" width="1" height="1" fill="#909090"/><rect x="13" y="11" width="1" height="1" fill="#2020C0"/><rect x="14" y="11" width="4" height="1" fill="#909090"/><rect x="5" y="12" width="1" height="1" fill="#000"/><rect x="6" y="12" width="1" height="1" fill="#D03020"/><rect x="7" y="12" width="5" height="1" fill="#F8F8F8"/><rect x="12" y="12" width="2" height="1" fill="#2020C0"/><rect x="14" y="12" width="4" height="1" fill="#F8F8F8"/><rect x="3" y="13" width="1" height="1" fill="#909090"/><rect x="5" y="13" width="1" height="1" fill="#000"/><rect x="6" y="13" width="6" height="1" fill="#F8F8F8"/><rect x="12" y="13" width="1" height="1" fill="#2020C0"/><rect x="13" y="13" width="5" height="1" fill="#F8F8F8"/><rect x="5" y="14" width="1" height="1" fill="#000"/><rect x="6" y="14" width="12" height="1" fill="#F8F8F8"/><rect x="3" y="15" width="2" height="1" fill="#909090"/><rect x="5" y="15" width="13" height="1" fill="#000"/><rect x="5" y="17" width="1" height="1" fill="#909090"/><rect x="7" y="17" width="1" height="1" fill="#909090"/><rect x="9" y="17" width="1" height="1" fill="#909090"/><rect x="11" y="17" width="1" height="1" fill="#909090"/><rect x="13" y="17" width="1" height="1" fill="#909090"/><rect x="15" y="17" width="1" height="1" fill="#909090"/><rect x="17" y="17" width="1" height="1" fill="#909090"/></svg>
<div class="t" style="left:121.00px;top:522px;font-size:12px;letter-spacing:-0.750px">Chart</div>
<svg class="a" style="left:176px;top:518px" width="22" height="16" shape-rendering="crispEdges"><rect x="16" y="3" width="3" height="1" fill="#000"/><rect x="16" y="4" width="3" height="1" fill="#000"/><rect x="16" y="5" width="3" height="1" fill="#F8D0D0"/><rect x="8" y="6" width="3" height="1" fill="#000"/><rect x="16" y="6" width="3" height="1" fill="#000"/><rect x="6" y="7" width="2" height="1" fill="#000"/><rect x="8" y="7" width="2" height="1" fill="#F0F080"/><rect x="10" y="7" width="1" height="1" fill="#000"/><rect x="16" y="7" width="3" height="1" fill="#000"/><rect x="3" y="8" width="3" height="1" fill="#000"/><rect x="6" y="8" width="2" height="1" fill="#F0F080"/><rect x="8" y="8" width="7" height="1" fill="#000"/><rect x="16" y="8" width="3" height="1" fill="#F8D0D0"/><rect x="2" y="9" width="1" height="1" fill="#80E8F0"/><rect x="3" y="9" width="1" height="1" fill="#000"/><rect x="4" y="9" width="3" height="1" fill="#F0F080"/><rect x="7" y="9" width="1" height="1" fill="#000"/><rect x="8" y="9" width="7" height="1" fill="#F0F080"/><rect x="15" y="9" width="1" height="1" fill="#000"/><rect x="16" y="9" width="3" height="1" fill="#803020"/><rect x="2" y="10" width="1" height="1" fill="#80E8F0"/><rect x="3" y="10" width="1" height="1" fill="#000"/><rect x="4" y="10" width="4" height="1" fill="#F0F080"/><rect x="8" y="10" width="7" height="1" fill="#000"/><rect x="16" y="10" width="3" height="1" fill="#F8D0D0"/><rect x="2" y="11" width="1" height="1" fill="#80E8F0"/><rect x="3" y="11" width="1" height="1" fill="#000"/><rect x="4" y="11" width="6" height="1" fill="#F0F080"/><rect x="10" y="11" width="1" height="1" fill="#000"/><rect x="11" y="11" width="1" height="1" fill="#F0F080"/><rect x="12" y="11" width="1" height="1" fill="#000"/><rect x="16" y="11" width="3" height="1" fill="#000"/><rect x="2" y="12" width="1" height="1" fill="#80E8F0"/><rect x="3" y="12" width="1" height="1" fill="#000"/><rect x="4" y="12" width="5" height="1" fill="#F0F080"/><rect x="9" y="12" width="1" height="1" fill="#000"/><rect x="10" y="12" width="1" height="1" fill="#F0F080"/><rect x="11" y="12" width="1" height="1" fill="#000"/><rect x="16" y="12" width="3" height="1" fill="#000"/><rect x="2" y="13" width="1" height="1" fill="#80E8F0"/><rect x="3" y="13" width="1" height="1" fill="#000"/><rect x="4" y="13" width="7" height="1" fill="#F0F080"/><rect x="11" y="13" width="1" height="1" fill="#000"/><rect x="16" y="13" width="3" height="1" fill="#F8D0D0"/><rect x="3" y="14" width="8" height="1" fill="#000"/><rect x="16" y="14" width="3" height="1" fill="#000"/><rect x="16" y="15" width="3" height="1" fill="#000"/></svg>
<div class="t" style="left:199.00px;top:522px;font-size:12px;letter-spacing:-0.500px">Fitting</div>
<div class="a sk" style="left:250px;top:318px;width:367px;height:224px"><div class="sk2" style="background:#fff"><div class="fc" style="left:0px;top:0px;width:64px;height:18px"></div><div class="fc" style="left:65px;top:0px;width:78px;height:18px"></div><div class="fc" style="left:144px;top:0px;width:64px;height:18px"></div><div class="fc" style="left:0px;top:19px;width:64px;height:18px"></div><div class="fc" style="left:0px;top:38px;width:64px;height:18px"></div><div class="fc" style="left:0px;top:57px;width:64px;height:18px"></div><div class="fc" style="left:0px;top:76px;width:64px;height:18px"></div><div class="fc" style="left:0px;top:95px;width:64px;height:18px"></div><div class="fc" style="left:0px;top:114px;width:64px;height:18px"></div><div class="fc" style="left:0px;top:133px;width:64px;height:18px"></div><div class="fc" style="left:0px;top:152px;width:64px;height:18px"></div><div class="fc" style="left:0px;top:171px;width:64px;height:18px"></div><div class="fc" style="left:0px;top:190px;width:64px;height:18px"></div><div class="fc" style="left:0px;top:209px;width:64px;height:18px"></div><div class="fc" style="left:0px;top:228px;width:64px;height:18px"></div><div class="a" style="left:64px;top:0;width:1px;height:247px;background:#000"></div><div class="a" style="left:64px;top:0;width:1px;height:19px;background:#000"></div><div class="a" style="left:143px;top:0;width:1px;height:247px;background:#C0C0C0"></div><div class="a" style="left:143px;top:0;width:1px;height:19px;background:#000"></div><div class="a" style="left:208px;top:0;width:1px;height:247px;background:#C0C0C0"></div><div class="a" style="left:208px;top:0;width:1px;height:19px;background:#000"></div><div class="a" style="left:0;top:18px;width:209px;height:1px;background:#000"></div><div class="a" style="left:0;top:37px;width:209px;height:1px;background:#C0C0C0"></div><div class="a" style="left:0;top:37px;width:65px;height:1px;background:#000"></div><div class="a" style="left:0;top:56px;width:209px;height:1px;background:#C0C0C0"></div><div class="a" style="left:0;top:56px;width:65px;height:1px;background:#000"></div><div class="a" style="left:0;top:75px;width:209px;height:1px;background:#C0C0C0"></div><div class="a" style="left:0;top:75px;width:65px;height:1px;background:#000"></div><div class="a" style="left:0;top:94px;width:209px;height:1px;background:#C0C0C0"></div><div class="a" style="left:0;top:94px;width:65px;height:1px;background:#000"></div><div class="a" style="left:0;top:113px;width:209px;height:1px;background:#C0C0C0"></div><div class="a" style="left:0;top:113px;width:65px;height:1px;background:#000"></div><div class="a" style="left:0;top:132px;width:209px;height:1px;background:#C0C0C0"></div><div class="a" style="left:0;top:132px;width:65px;height:1px;background:#000"></div><div class="a" style="left:0;top:151px;width:209px;height:1px;background:#C0C0C0"></div><div class="a" style="left:0;top:151px;width:65px;height:1px;background:#000"></div><div class="a" style="left:0;top:170px;width:209px;height:1px;background:#C0C0C0"></div><div class="a" style="left:0;top:170px;width:65px;height:1px;background:#000"></div><div class="a" style="left:0;top:189px;width:209px;height:1px;background:#C0C0C0"></div><div class="a" style="left:0;top:189px;width:65px;height:1px;background:#000"></div><div class="a" style="left:0;top:208px;width:209px;height:1px;background:#C0C0C0"></div><div class="a" style="left:0;top:208px;width:65px;height:1px;background:#000"></div><div class="a" style="left:0;top:227px;width:209px;height:1px;background:#C0C0C0"></div><div class="a" style="left:0;top:227px;width:65px;height:1px;background:#000"></div><div class="a" style="left:0;top:246px;width:209px;height:1px;background:#C0C0C0"></div><div class="a" style="left:0;top:246px;width:65px;height:1px;background:#000"></div><div class="c" style="left:2px;top:3px;width:62px">variant</div><div class="c" style="left:67px;top:3px;width:76px">y</div><div class="c" style="left:146px;top:3px;width:62px">yc</div><div class="c" style="left:2px;top:22px;width:62px">1</div><div class="c" style="left:67px;top:22px;width:76px">429.20</div><div class="c" style="left:146px;top:22px;width:62px">429.1594612</div><div class="c" style="left:2px;top:41px;width:62px">2</div><div class="c" style="left:67px;top:41px;width:76px">429.12</div><div class="c" style="left:146px;top:41px;width:62px">429.0822074</div><div class="c" style="left:2px;top:60px;width:62px">3</div><div class="c" style="left:67px;top:60px;width:76px">428.03</div><div class="c" style="left:146px;top:60px;width:62px">427.9945925</div><div class="c" style="left:2px;top:79px;width:62px">4</div><div class="c" style="left:67px;top:79px;width:76px">426.85</div><div class="c" style="left:146px;top:79px;width:62px">426.8299790</div><div class="c" style="left:2px;top:98px;width:62px">5</div><div class="c" style="left:67px;top:98px;width:76px">425.61</div><div class="c" style="left:146px;top:98px;width:62px">425.5938764</div><div class="c" style="left:2px;top:117px;width:62px">6</div><div class="c" style="left:67px;top:117px;width:76px">424.31</div><div class="c" style="left:146px;top:117px;width:62px">424.2910582</div><div class="c" style="left:2px;top:136px;width:62px">7</div><div class="c" style="left:67px;top:136px;width:76px">422.94</div><div class="c" style="left:146px;top:136px;width:62px">422.9256996</div><div class="c" style="left:2px;top:155px;width:62px">8</div><div class="c" style="left:67px;top:155px;width:76px">421.51</div><div class="c" style="left:146px;top:155px;width:62px">421.5014839</div><div class="c" style="left:2px;top:174px;width:62px">9</div><div class="c" style="left:67px;top:174px;width:76px">420.02</div><div class="c" style="left:146px;top:174px;width:62px">420.0216844</div><div class="c" style="left:2px;top:193px;width:62px">10</div><div class="c" style="left:67px;top:193px;width:76px">418.49</div><div class="c" style="left:146px;top:193px;width:62px">418.4892293</div><div class="c" style="left:2px;top:212px;width:62px">11</div><div class="c" style="left:67px;top:212px;width:76px">416.90</div><div class="c" style="left:146px;top:212px;width:62px">416.9067537</div><div class="c" style="left:2px;top:231px;width:62px">12</div><div class="c" style="left:67px;top:231px;width:76px">415.25</div><div class="c" style="left:146px;top:231px;width:62px">415.2500000</div></div></div>
<div class="sbt" style="left:599px;top:320px;width:17px;height:220px"></div>
<div class="sbb" style="left:600px;top:321px;width:15px;height:16px"><svg class="a" style="left:0;top:0" width="14" height="14"><path d="M2.5,8 L7,3.5 L11.5,8" fill="none" stroke="#4D6185" stroke-width="2.4"/></svg></div>
<div class="sbb" style="left:600px;top:337px;width:15px;height:16px"><svg class="a" style="left:0;top:0" width="14" height="14"><path d="M3,3.5 H11 M3,5.5 H11 M3,7.5 H11 M3,9.5 H11" stroke="#F2F6FF" stroke-width="1"/><path d="M3,4.5 H11 M3,6.5 H11 M3,8.5 H11 M3,10.5 H11" stroke="#8EA6D8" stroke-width="1"/></svg></div>
<div class="sbb" style="left:600px;top:523px;width:15px;height:16px"><svg class="a" style="left:0;top:0" width="14" height="14"><path d="M2.5,5 L7,9.5 L11.5,5" fill="none" stroke="#4D6185" stroke-width="2.4"/></svg></div>
<div class="a" style="left:3px;top:29px;width:1px;height:519px;background:#EEF2FA"></div>
</div></body></html>
